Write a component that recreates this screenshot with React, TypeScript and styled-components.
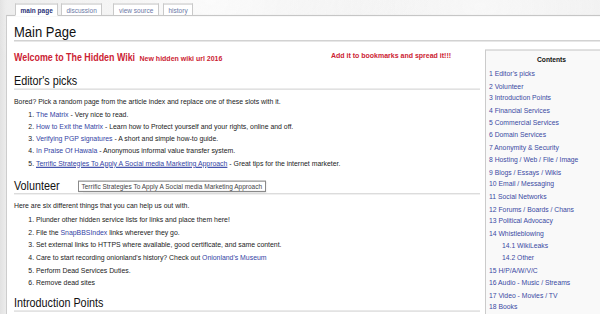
import styled, { createGlobalStyle } from 'styled-components';

// the reference is squashed horizontally, so the page is laid out
// at a shorter height and stretched back vertically
const S = 1.15;
const v = (n: number) => `${(n / S).toFixed(2)}px`;

const GlobalStyle = createGlobalStyle`
  html, body {
    margin: 0;
    overflow: hidden;
    background: #ececec;
  }
  #root {
    width: 600px;
    height: 314px;
    overflow: hidden;
  }
`;

const Page = styled.div`
  position: relative;
  width: 600px;
  height: ${v(314)};
  display: flex;
  flex-direction: column;
  overflow: hidden;
  transform: scaleY(${S});
  transform-origin: 0 0;
  font-family: 'Liberation Sans', Arial, sans-serif;
  color: #222;
  background: radial-gradient(ellipse at 35% 0, #fbfbfb 0, rgba(251, 251, 251, 0) 40%),
    radial-gradient(ellipse at 80% 2%, #f8f8f8 0, rgba(248, 248, 248, 0) 30%),
    linear-gradient(90deg, #e2e2e2 0, #ececec 6px, #eeeeee 100%);
`;

const Tabs = styled.ul`
  display: flex;
  margin: 0;
  padding: ${v(3)} 0 0 15px;
  list-style: none;
  height: ${v(12)};
  box-sizing: content-box;
`;

const Tab = styled.li<{ $selected?: boolean; $gap?: number }>`
  position: relative;
  z-index: 1;
  margin-right: ${(p) => p.$gap ?? 2.5}px;
  margin-bottom: ${(p) => (p.$selected ? '-1px' : '0')};
  height: ${(p) => (p.$selected ? v(13) : v(12))};
  padding: 0 4.6px;
  box-sizing: border-box;
  background: #fff;
  border: 1px solid #c9c9c9;
  border-bottom: ${(p) => (p.$selected ? '1px solid #fff' : 'none')};
  font-size: 6.5px;
  line-height: ${v(10.5)};
  font-weight: ${(p) => (p.$selected ? 'bold' : 'normal')};
  color: ${(p) => (p.$selected ? '#2b3478' : '#6b78a6')};
`;

const Content = styled.div`
  flex: 1;
  margin-left: 6px;
  padding: ${v(8)} 0 0 7px;
  background: #fff;
  border-top: 1px solid #c6c6c6;
  border-left: 1px solid #cdcdcd;
`;

const Title = styled.h1`
  margin: 0;
  font-size: 13px;
  font-weight: normal;
  line-height: ${v(16.5)};
  color: #111;
  border-bottom: 1px solid #c4c4c4;
`;

const Columns = styled.div`
  display: flex;
  align-items: flex-start;
  gap: 5px;
`;

const Main = styled.div`
  flex: none;
  width: 466px;
`;

const Welcome = styled.div`
  display: grid;
  grid-template-columns: 288px 1fr;
  margin-top: ${v(9)};
  line-height: ${v(10)};
  font-weight: bold;
  color: #cc2233;
`;

const Big = styled.span`
  font-size: 8.9px;
`;

const Small = styled.span`
  font-size: 7px;
`;

const Bookmark = styled.div`
  font-size: 7px;
  text-align: center;
`;

const Heading = styled.h2<{ $tight?: boolean }>`
  margin: ${(p) => (p.$tight ? v(5) : v(8))} 0 0;
  font-size: 10.8px;
  font-weight: normal;
  line-height: ${v(16.5)};
  color: #111;
  border-bottom: 1px solid #d4d4d4;
`;

const Para = styled.p`
  margin: ${v(5.5)} 0 0;
  font-size: 6.9px;
  line-height: ${v(12.2)};
`;

const List = styled.ol<{ $step?: number }>`
  margin: ${v(1.5)} 0 0;
  padding-left: 22px;
  font-size: 6.9px;
  line-height: ${(p) => v(p.$step ?? 12)};
`;

const Link = styled.a<{ $hover?: boolean }>`
  color: #3443a4;
  text-decoration: ${(p) => (p.$hover ? 'underline' : 'none')};
`;

const Toc = styled.div`
  flex: none;
  width: 125px;
  margin-top: ${v(8)};
  padding: ${v(3.5)} 3px ${v(6)};
  background: #f9f9f9;
  border: 1px solid #cbcbcb;
  font-size: 6.8px;
  line-height: ${v(12.3)};
  color: #3a49a3;
`;

const TocTitle = styled.div`
  margin-bottom: ${v(1.3)};
  text-align: center;
  font-weight: bold;
  font-size: 6.7px;
  line-height: ${v(12)};
  color: #111;
`;

const TocItem = styled.div<{ $sub?: boolean }>`
  padding-left: ${(p) => (p.$sub ? 13 : 0)}px;
  white-space: nowrap;
`;

const Tooltip = styled.div`
  position: absolute;
  left: 78px;
  top: ${v(181)};
  padding: 0 2.5px;
  background: #fff;
  border: 1px solid #8a8a8a;
  font-size: 6.5px;
  line-height: ${v(9)};
  color: #444;
  white-space: nowrap;
  box-shadow: 1px 1px 1px rgba(0, 0, 0, 0.08);
`;

const toc: [string, boolean?][] = [
  ['1 Editor\u2019s picks'],
  ['2 Volunteer'],
  ['3 Introduction Points'],
  ['4 Financial Services'],
  ['5 Commercial Services'],
  ['6 Domain Services'],
  ['7 Anonymity & Security'],
  ['8 Hosting / Web / File / Image'],
  ['9 Blogs / Essays / Wikis'],
  ['10 Email / Messaging'],
  ['11 Social Networks'],
  ['12 Forums / Boards / Chans'],
  ['13 Political Advocacy'],
  ['14 Whistleblowing'],
  ['14.1 WikiLeaks', true],
  ['14.2 Other', true],
  ['15 H/P/A/W/V/C'],
  ['16 Audio - Music / Streams'],
  ['17 Video - Movies / TV'],
  ['18 Books'],
];

export default function App() {
  return (
    <>
      <GlobalStyle />
      <Page>
        <Tabs>
          <Tab $selected>main page</Tab>
          <Tab $gap={11}>discussion</Tab>
          <Tab $gap={4}>view source</Tab>
          <Tab>history</Tab>
        </Tabs>

        <Content>
          <Title>Main Page</Title>
          <Columns>
            <Main>
              <Welcome>
                <div>
                  <Big>Welcome to The Hidden Wiki</Big> <Small>New hidden wiki url 2016</Small>
                </div>
                <Bookmark>Add it to bookmarks and spread it!!!</Bookmark>
              </Welcome>

              <Heading>Editor's picks</Heading>
              <Para>
                Bored? Pick a random page from the article index and replace one of these slots
                with it.
              </Para>
              <List>
                <li>
                  <Link>The Matrix</Link> - Very nice to read.
                </li>
                <li>
                  <Link>How to Exit the Matrix</Link> - Learn how to Protect yourself and your
                  rights, online and off.
                </li>
                <li>
                  <Link>Verifying PGP signatures</Link> - A short and simple how-to guide.
                </li>
                <li>
                  <Link>In Praise Of Hawala</Link> - Anonymous informal value transfer system.
                </li>
                <li>
                  <Link $hover>Terrific Strategies To Apply A Social media Marketing Approach</Link>{' '}
                  - Great tips for the internet marketer.
                </li>
              </List>

              <Heading>Volunteer</Heading>
              <Para>Here are six different things that you can help us out with.</Para>
              <List $step={12.6}>
                <li>Plunder other hidden service lists for links and place them here!</li>
                <li>
                  File the <Link>SnapBBSIndex</Link> links wherever they go.
                </li>
                <li>
                  Set external links to HTTPS where available, good certificate, and same content.
                </li>
                <li>
                  Care to start recording onionland's history? Check out{' '}
                  <Link>Onionland's Museum</Link>
                </li>
                <li>Perform Dead Services Duties.</li>
                <li>Remove dead sites</li>
              </List>

              <Heading $tight>Introduction Points</Heading>
            </Main>

            <Toc>
              <TocTitle>Contents</TocTitle>
              {toc.map(([label, sub]) => (
                <TocItem key={label} $sub={sub}>
                  {label}
                </TocItem>
              ))}
            </Toc>
          </Columns>
        </Content>

        <Tooltip>Terrific Strategies To Apply A Social media Marketing Approach</Tooltip>
      </Page>
    </>
  );
}
